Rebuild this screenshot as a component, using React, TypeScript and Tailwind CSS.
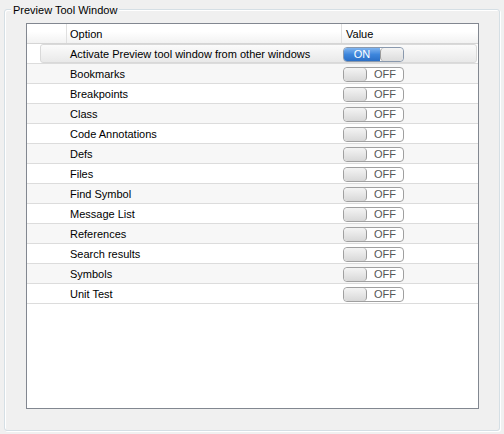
import { useState } from "react";

interface OptionRow {
  name: string;
  on: boolean;
}

const initialRows: OptionRow[] = [
  { name: "Activate Preview tool window from other windows", on: true },
  { name: "Bookmarks", on: false },
  { name: "Breakpoints", on: false },
  { name: "Class", on: false },
  { name: "Code Annotations", on: false },
  { name: "Defs", on: false },
  { name: "Files", on: false },
  { name: "Find Symbol", on: false },
  { name: "Message List", on: false },
  { name: "References", on: false },
  { name: "Search results", on: false },
  { name: "Symbols", on: false },
  { name: "Unit Test", on: false },
];

const Toggle: React.FC<{ on: boolean; onClick: () => void }> = ({ on, onClick }) => {
  if (on) {
    return (
      <button
        onClick={onClick}
        className="mt-[2px] flex h-[15px] w-[61px] overflow-hidden rounded-[4px] border border-[#8a99ad] bg-white"
      >
        <span className="flex h-full w-[36px] items-center justify-center bg-gradient-to-b from-[#7fb4ef] via-[#3d86dc] to-[#2a6fc6] text-[11px] leading-none text-white">
          ON
        </span>
        <span className="h-full flex-1 rounded-[4px] border-l border-[#9a9a9a] bg-gradient-to-b from-[#f4f4f4] to-[#dcdcdc]" />
      </button>
    );
  }
  return (
    <button
      onClick={onClick}
      className="mt-[2px] flex h-[15px] w-[61px] overflow-hidden rounded-[4px] border border-[#a0a0a0] bg-white"
    >
      <span className="h-full w-[23px] rounded-[4px] border-r border-[#9a9a9a] bg-gradient-to-b from-[#f4f4f4] to-[#d8d8d8]" />
      <span className="flex h-full flex-1 items-center justify-center text-[11px] leading-none text-[#555]">
        OFF
      </span>
    </button>
  );
};

const App: React.FC = () => {
  const [rows, setRows] = useState<OptionRow[]>(initialRows);

  const toggle = (i: number) => {
    setRows(rows.map((r, idx) => (idx === i ? { ...r, on: !r.on } : r)));
  };

  return (
    <div
      className="h-[434px] w-[504px] bg-[#f0f0f0] px-[4px] pt-[9px] text-[11px] text-black"
      style={{ fontFamily: '"Liberation Sans", Arial, sans-serif' }}
    >
      <div className="relative h-[422px] rounded-[3px] border border-[#d5dfe5] pl-[21px] pr-[20px] pt-[13px] shadow-[inset_1px_1px_0_#fff,1px_1px_0_#fff]">
        <span className="absolute left-[6px] top-[-7px] bg-[#f0f0f0] px-[2px] leading-[15px]">
          Preview Tool Window
        </span>

        <div className="h-[386px] border border-[#828790] bg-white">
          <div className="flex h-[20px] border-b border-[#d5d5d5] bg-gradient-to-b from-white from-40% to-[#f2f2f2]">
            <div className="w-[40px] border-r border-[#e0e0e0]" />
            <div className="flex w-[275px] items-center border-r border-[#e0e0e0] pl-[3px] pt-[1px]">Option</div>
            <div className="flex flex-1 items-center pl-[4px] pt-[1px]">Value</div>
          </div>

          {rows.map((row, i) => (
            <div
              key={row.name}
              className={`flex h-[20px] items-center border-b border-[#dcdcdc] ${i % 2 === 1 ? "bg-[#f7f7f7]" : "bg-white"}`}
            >
              <div className="w-[13px]" />
              {i === 0 ? (
                <div className="mr-[1px] flex h-[19px] flex-1 items-center rounded-[3px] border border-[#d9d9d9] bg-gradient-to-b from-[#fbfbfb] to-[#e9e9e9] pl-[29px]">
                  <span className="w-[273px] pt-[2px]">{row.name}</span>
                  <Toggle on={row.on} onClick={() => toggle(i)} />
                </div>
              ) : (
                <div className="flex flex-1 items-center pl-[30px]">
                  <span className="w-[273px] pt-[2px]">{row.name}</span>
                  <Toggle on={row.on} onClick={() => toggle(i)} />
                </div>
              )}
            </div>
          ))}
        </div>
      </div>
    </div>
  );
};

export default App;
